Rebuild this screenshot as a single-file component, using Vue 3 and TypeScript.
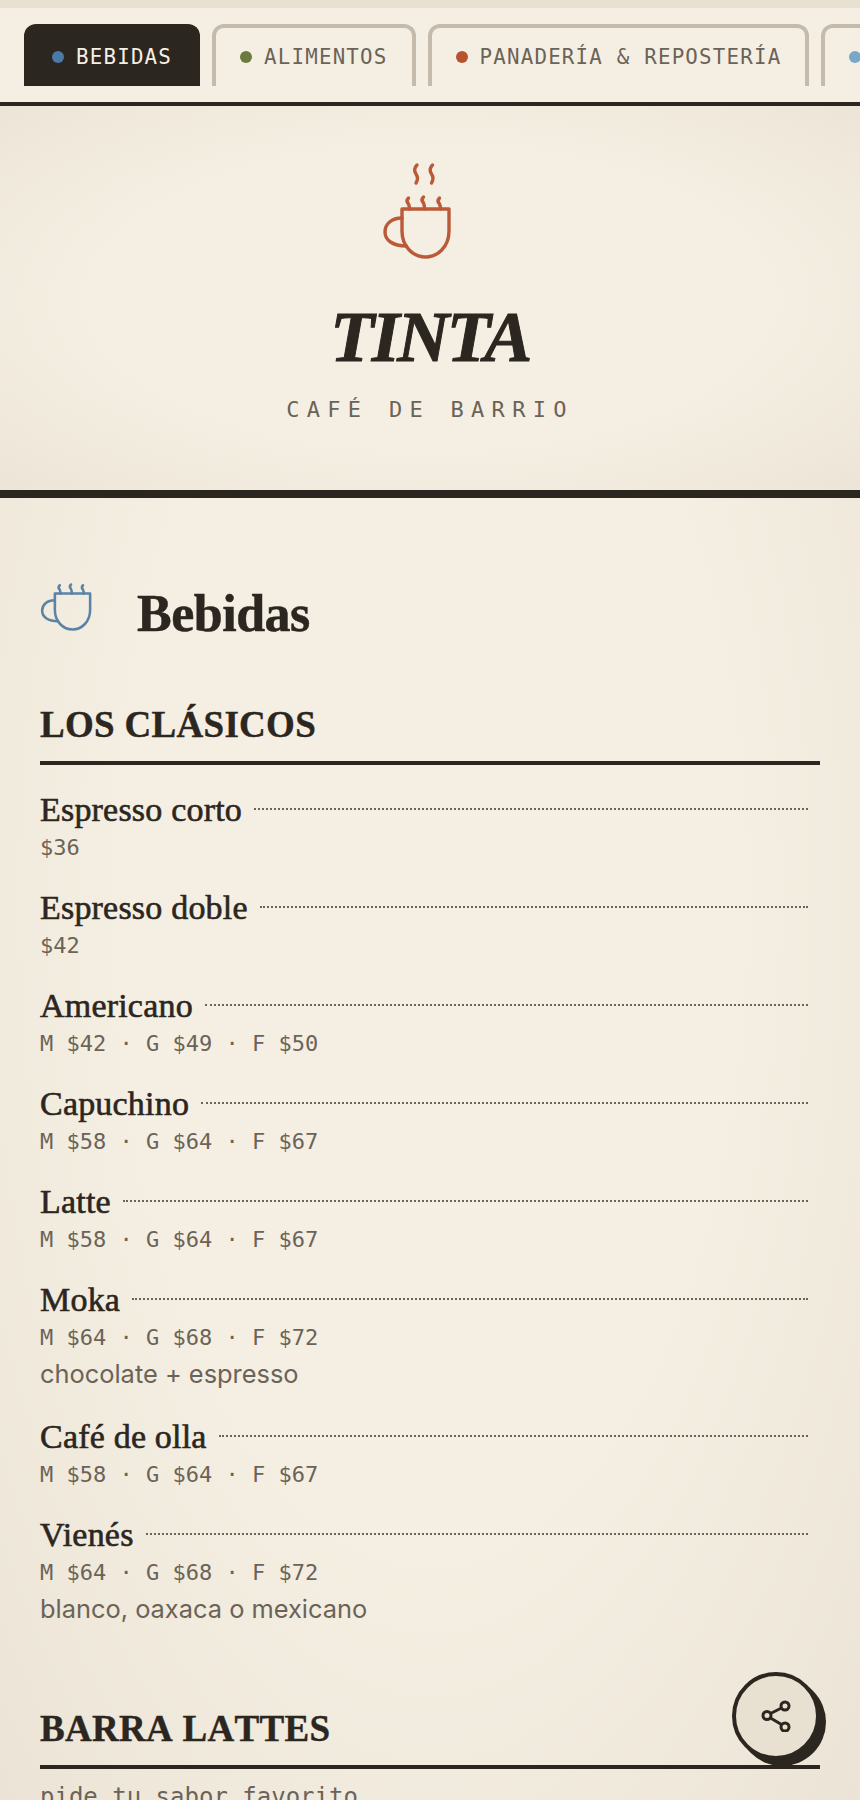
<script setup lang="ts">
interface Item {
  name: string
  price: string
  note?: string
}

const tabs = [
  { label: 'BEBIDAS', color: '#4a7ba6', active: true },
  { label: 'ALIMENTOS', color: '#6b7a3e', active: false },
  { label: 'PANADERÍA & REPOSTERÍA', color: '#b8532f', active: false },
  { label: 'TEMPORADA', color: '#7aa7c7', active: false }
]

const clasicos: Item[] = [
  { name: 'Espresso corto', price: '$36' },
  { name: 'Espresso doble', price: '$42' },
  { name: 'Americano', price: 'M $42 · G $49 · F $50' },
  { name: 'Capuchino', price: 'M $58 · G $64 · F $67' },
  { name: 'Latte', price: 'M $58 · G $64 · F $67' },
  { name: 'Moka', price: 'M $64 · G $68 · F $72', note: 'chocolate + espresso' },
  { name: 'Café de olla', price: 'M $58 · G $64 · F $67' },
  { name: 'Vienés', price: 'M $64 · G $68 · F $72', note: 'blanco, oaxaca o mexicano' }
]
</script>

<template>
  <div class="page">
    <div class="strip"></div>
    <nav class="tabs">
      <a v-for="tab in tabs" :key="tab.label" class="tab" :class="{ active: tab.active }">
        <span class="dot" :style="{ background: tab.color }"></span>
        {{ tab.label }}
      </a>
    </nav>

    <header class="hero">
      <svg class="hero-cup" viewBox="0.5 0 100 100" fill="none" stroke="#bb5a38" stroke-width="3.400" stroke-linecap="round" stroke-linejoin="round">
        <path d="M37.500 4c-3 3-3 6-1 9c2 3 2 6 0 9" />
        <path d="M53 4c-3 3-3 6-1 9c2 3 2 6 0 9" />
        <path d="M22.500 48H69.500V70C69.500 86 58 96 46 96C34 96 22.500 86 22.500 70Z" />
        <path d="M22.500 57C12 57 5.500 63 5.500 71C5.500 79 13 85 27 85" />
        <path d="M29 37c-2 2-2 4 0 6c1 2 1 3 1 5" />
        <path d="M44 36c-2 2-2 4 0 6c1 2 1 4 1 6" />
        <path d="M60 37c-2 2-2 4 0 6c1 2 1 3 1 5" />
      </svg>
      <h1>TINTA</h1>
      <p class="tagline">CAFÉ DE BARRIO</p>
    </header>

    <main class="menu">
      <div class="cat-head">
        <svg class="cat-cup" viewBox="0 30 72 70" fill="none" stroke="#5a83a8" stroke-width="3.400" stroke-linecap="round" stroke-linejoin="round">
          <path d="M22.500 48H69.500V70C69.500 86 58 96 46 96C34 96 22.500 86 22.500 70Z" />
          <path d="M22.500 57C12 57 5.500 63 5.500 71C5.500 79 13 85 27 85" />
          <path d="M29 37c-2 2-2 4 0 6c1 2 1 3 1 5" />
          <path d="M44 36c-2 2-2 4 0 6c1 2 1 4 1 6" />
          <path d="M60 37c-2 2-2 4 0 6c1 2 1 3 1 5" />
        </svg>
        <h2>Bebidas</h2>
      </div>

      <h3 class="group">LOS CLÁSICOS</h3>
      <ul class="items">
        <li v-for="item in clasicos" :key="item.name" class="item">
          <div class="item-top">
            <span class="item-name">{{ item.name }}</span>
            <span class="leader"></span>
          </div>
          <div class="item-price">{{ item.price }}</div>
          <div v-if="item.note" class="item-note">{{ item.note }}</div>
        </li>
      </ul>

      <h3 class="group">BARRA LATTES</h3>
      <p class="hint">pide tu sabor favorito</p>
    </main>

    <button class="share" aria-label="Compartir">
      <svg viewBox="0 0 32 32" width="32" height="32" fill="none" stroke="#2c2620" stroke-width="3">
        <circle cx="25" cy="6" r="4" />
        <circle cx="7" cy="15.500" r="4" />
        <circle cx="25" cy="27" r="4" />
        <path d="M10.500 13.500L21.500 8M10.500 18L21.500 24.500" />
      </svg>
    </button>
  </div>
</template>

<style>
html, body { margin: 0; background: #f5efe3; }
</style>

<style scoped>
.page {
  position: relative;
  height: 1800px;
  overflow: hidden;
  color: #2c2620;
  font-family: "Inter", sans-serif;
  background: radial-gradient(ellipse at 50% 50%, #f5efe3 50%, #ebe4d6 100%);
}

.strip { height: 8px; background: #e8e0d0; }

.tabs {
  display: flex;
  gap: 12px;
  height: 98px;
  box-sizing: border-box;
  padding: 16px 0 0 24px;
  background: #f5efe3;
  border-bottom: 4px solid #2c2620;
  overflow: hidden;
}

.tab {
  flex: none;
  display: flex;
  align-items: center;
  gap: 12px;
  height: 62px;
  box-sizing: border-box;
  padding: 0 24px;
  border: 4px solid #c4bbad;
  border-bottom: none;
  border-radius: 12px 12px 0 0;
  font-family: "DejaVu Sans Mono", monospace;
  font-size: 20.800px;
  letter-spacing: 1.200px;
  color: #6b6358;
}

.tab.active {
  background: #2c2620;
  border-color: #2c2620;
  color: #f5efe3;
}

.dot { width: 12px; height: 12px; border-radius: 50%; }

.hero {
  height: 392px;
  box-sizing: border-box;
  padding-top: 55px;
  text-align: center;
  border-bottom: 8px solid #2c2620;
  background: radial-gradient(ellipse at 50% 50%, #f5efe3 55%, #ece5d7 100%);
}

.hero-cup { display: block; width: 100px; height: 100px; margin: 0 auto; }

h1 {
  margin: 36px 0 0;
  font-family: "Liberation Serif", serif;
  font-style: italic;
  font-weight: 700;
  font-size: 72px;
  line-height: 80px;
  letter-spacing: -2.500px;
  -webkit-text-stroke: 1px #2c2620;
}

.tagline {
  margin: 20px 0 0;
  font-family: "DejaVu Sans Mono", monospace;
  font-size: 22px;
  line-height: 26px;
  letter-spacing: 7.300px;
  color: #6b6358;
}

.menu { padding: 87px 40px 0; }

.cat-head { display: flex; align-items: center; gap: 45px; height: 56px; }

.cat-cup {
  width: 54px;
  height: 52.500px;
  flex: none;
  align-self: flex-start;
  margin: -5px 0 0 -2px;
}

h2 {
  margin: 0;
  font-family: "Liberation Serif", serif;
  font-weight: 700;
  font-size: 52px;
  letter-spacing: -0.500px;
  -webkit-text-stroke: 0.500px #2c2620;
}

.group {
  margin: 0;
  padding: 0 0 13px;
  border-bottom: 4px solid #2c2620;
  font-family: "Liberation Serif", serif;
  font-weight: 700;
  font-size: 37px;
  line-height: 46px;
  letter-spacing: 0.300px;
  font-kerning: none;
  -webkit-text-stroke: 0.400px #2c2620;
}

.cat-head + .group { margin-top: 61px; }

.items { list-style: none; margin: 0 0 82px; padding: 25px 0 0; }

.item { margin-bottom: 28px; }

.item-top { display: flex; align-items: center; gap: 12px; height: 40px; padding-right: 12px; }

.item-name {
  font-family: "Liberation Serif", serif;
  font-size: 34px;
  letter-spacing: 0.200px;
  -webkit-text-stroke: 0.600px #2c2620;
}

.leader { flex: 1; border-top: 2px dotted #6b6358; margin-top: -2px; }

.item-price {
  height: 30px;
  line-height: 36px;
  font-family: "DejaVu Sans Mono", monospace;
  font-size: 22px;
  color: #6b6358;
}

.item-note {
  margin-top: 8px;
  height: 31px;
  line-height: 31px;
  font-size: 25.400px;
  color: #6b6358;
}

.hint {
  margin: 14px 0 0;
  font-family: "DejaVu Sans Mono", monospace;
  font-size: 24px;
  color: #6b6358;
}

.share {
  position: absolute;
  right: 40px;
  bottom: 40px;
  width: 88px;
  height: 88px;
  display: flex;
  align-items: center;
  justify-content: center;
  padding: 0;
  background: #e8e0d0;
  border: 4px solid #2c2620;
  border-radius: 50%;
  box-shadow: 6px 6px 0 #2c2620;
}
</style>
